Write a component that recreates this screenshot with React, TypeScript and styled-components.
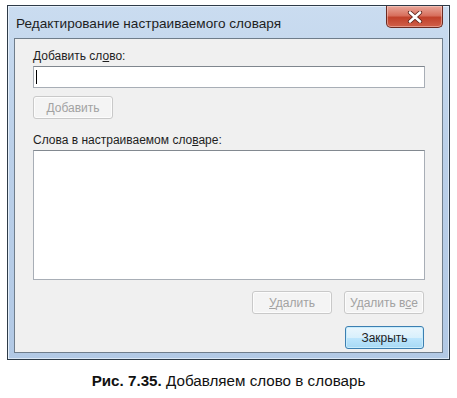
import React from "react";
import styled, { createGlobalStyle } from "styled-components";

const GlobalStyle = createGlobalStyle`
  html, body {
    margin: 0;
    padding: 0;
    background: #ffffff;
  }
  body {
    font-family: "Liberation Sans", Arial, sans-serif;
  }
`;

const Page = styled.div`
  width: 457px;
  height: 398px;
  padding: 5px 7px 0 7px;
  box-sizing: border-box;
  display: flex;
  flex-direction: column;
`;

const Window = styled.div`
  border: 1px solid #2e3b48;
  background: linear-gradient(180deg, #cadcf0 0%, #bbd0e9 40%, #b2c9e5 100%);
  padding: 0 6px 6px 6px;
  display: flex;
  flex-direction: column;
  box-shadow: inset 1px 1px 0 #e6f0fb, inset -1px -1px 0 #dbe8f6;
`;

const TitleBar = styled.div`
  height: 32px;
  display: flex;
  align-items: flex-start;
  justify-content: space-between;
`;

const Title = styled.div`
  font-family: "Liberation Sans", Arial, sans-serif;
  font-size: 13.6px;
  color: #1e1e1e;
  padding: 10px 0 0 2px;
`;

const CloseButton = styled.div`
  width: 55px;
  height: 21px;
  border: 1px solid #6b2a22;
  border-top: none;
  border-radius: 0 0 5px 5px;
  background: linear-gradient(180deg, #e9a79a 0%, #d8705e 45%, #c1412b 55%, #d0604a 100%);
  display: flex;
  align-items: center;
  justify-content: center;
  box-shadow: inset 0 0 0 1px rgba(255, 220, 210, 0.45);
`;

const Client = styled.div`
  background: #f0f0f0;
  border: 1px solid #6f7d8b;
  padding: 9px 17px 3px 18px;
  display: flex;
  flex-direction: column;
`;

const Label = styled.div`
  font-size: 12px;
  color: #1e1e1e;
  line-height: 16px;
  margin-bottom: 2px;
`;

const TextBox = styled.div`
  height: 20px;
  background: #ffffff;
  border: 1px solid #a8aeb6;
  border-top-color: #7f868e;
  display: flex;
  align-items: center;
  padding-left: 2px;
`;

const Caret = styled.div`
  width: 1px;
  height: 14px;
  background: #000;
`;

const ListBox = styled.div`
  height: 128px;
  background: #ffffff;
  border: 1px solid #a8aeb6;
  border-top-color: #828990;
`;

const Button = styled.div<{ $disabled?: boolean; $default?: boolean }>`
  width: ${(p) => (p.$default ? 77 : 78)}px;
  height: 21px;
  box-sizing: content-box;
  border: 1px solid
    ${(p) => (p.$disabled ? "#c9c9c9" : p.$default ? "#3c7fb1" : "#707070")};
  border-radius: 3px;
  background: ${(p) =>
    p.$disabled
      ? "#f4f4f4"
      : p.$default
      ? "linear-gradient(180deg, #eaf6fd 0%, #d9f0fc 50%, #bee6fd 51%, #a7d9f5 100%)"
      : "linear-gradient(180deg, #f2f2f2 0%, #ebebeb 50%, #dddddd 51%, #cfcfcf 100%)"};
  box-shadow: ${(p) =>
    p.$default ? "inset 0 0 0 1px #c8ecfc" : "inset 0 0 0 1px #fcfcfc"};
  color: ${(p) => (p.$disabled ? "#a2a2a2" : "#1e1e1e")};
  font-size: 12px;
  display: flex;
  align-items: center;
  justify-content: center;
`;

const ButtonRow = styled.div<{ $mt: number }>`
  display: flex;
  justify-content: flex-end;
  gap: 12px;
  margin-top: ${(p) => p.$mt}px;
  padding-right: 1px;
`;

const Section = styled.div<{ $mt: number }>`
  margin-top: ${(p) => p.$mt}px;
  display: flex;
  flex-direction: column;
`;

const Caption = styled.div`
  margin-top: 12px;
  text-align: center;
  font-family: "Liberation Sans", Arial, sans-serif;
  font-size: 15.2px;
  color: #111;
`;

const App: React.FC = () => {
  return (
    <>
      <GlobalStyle />
      <Page>
        <Window>
          <TitleBar>
            <Title>Редактирование настраиваемого словаря</Title>
            <CloseButton>
              <svg width="16" height="12" viewBox="0 0 16 12">
                <path
                  d="M3 1.5 L13 10.5 M13 1.5 L3 10.5"
                  stroke="#5a2018"
                  strokeWidth="4.2"
                  strokeLinecap="round"
                />
                <path
                  d="M3 1.5 L13 10.5 M13 1.5 L3 10.5"
                  stroke="#ffffff"
                  strokeWidth="2.6"
                  strokeLinecap="round"
                />
              </svg>
            </CloseButton>
          </TitleBar>
          <Client>
            <Label>
              Добавить сл<u>о</u>во:
            </Label>
            <TextBox>
              <Caret />
            </TextBox>
            <Section $mt={8}>
              <Button $disabled>
                <span>
                  <u>Д</u>обавить
                </span>
              </Button>
            </Section>
            <Section $mt={13}>
              <Label>
                Слова в настраиваемом сло<u>в</u>аре:
              </Label>
              <ListBox />
            </Section>
            <ButtonRow $mt={11}>
              <Button $disabled>
                <span>
                  <u>У</u>далить
                </span>
              </Button>
              <Button $disabled>
                <span>
                  Удалить в<u>с</u>е
                </span>
              </Button>
            </ButtonRow>
            <ButtonRow $mt={12}>
              <Button $default>Закрыть</Button>
            </ButtonRow>
          </Client>
        </Window>
        <Caption>
          <b>Рис. 7.35.</b> Добавляем слово в словарь
        </Caption>
      </Page>
    </>
  );
};

export default App;
